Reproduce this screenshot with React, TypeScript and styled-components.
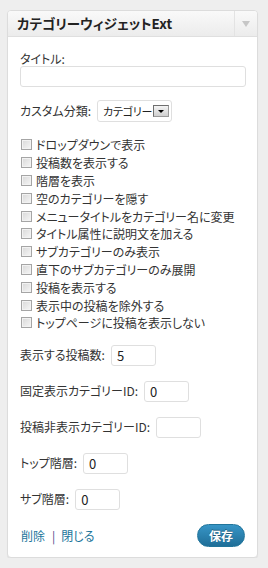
import React from "react";
import styled, { createGlobalStyle } from "styled-components";

const Global = createGlobalStyle`
  html, body { margin: 0; padding: 0; }
  body {
    background: #eeeeee;
    font-family: "Noto Sans CJK JP", "Liberation Sans", sans-serif;
    font-feature-settings: "palt";
    color: #333;
    font-size: 12px;
  }
`;

const Widget = styled.div`
  margin: 10px 0 0 7px;
  width: 249px;
  border: 1px solid #dcdcdc;
  border-radius: 4px;
  background: #fff;
  box-shadow: 0 1px 1px rgba(0, 0, 0, 0.06);
  overflow: hidden;
`;

const Header = styled.div`
  display: flex;
  height: 25px;
  background: linear-gradient(#f9f9f9, #ececec);
  border-bottom: 1px solid #dfdfdf;
`;

const Title = styled.h3`
  flex: 1;
  margin: 0;
  padding-left: 9px;
  font-size: 13.5px;
  font-weight: bold;
  line-height: 25px;
  color: #222;
`;

const Toggle = styled.div`
  width: 22px;
  border-left: 1px solid #e3e3e3;
  display: flex;
  align-items: center;
  justify-content: center;
  &::after {
    content: "";
    border-left: 4px solid transparent;
    border-right: 4px solid transparent;
    border-top: 6px solid #c6c6c6;
    margin-top: 1px;
  }
`;

const Body = styled.div`
  padding: 0 11px 10px 12px;
  display: flex;
  flex-direction: column;
`;

const FieldLabel = styled.label`
  display: block;
  margin-top: 15px;
  line-height: 14px;
`;

const TextInput = styled.input`
  box-sizing: border-box;
  width: 226px;
  height: 21px;
  border: 1px solid #dfdfdf;
  border-radius: 3px;
  padding: 0 5px;
  font: inherit;
  outline: none;
`;

const Row = styled.div<{ $mt: number }>`
  display: flex;
  align-items: center;
  gap: 6px;
  margin-top: ${(p) => p.$mt}px;
  line-height: 16px;
`;

const SelectBox = styled.div`
  box-sizing: border-box;
  flex: 0 0 75px;
  width: 75px;
  height: 22px;
  border: 1px solid #dfdfdf;
  border-radius: 3px;
  display: flex;
  align-items: center;
  gap: 1px;
  padding: 0 4px 0 5px;
  color: #222;
  white-space: nowrap;
`;

const SelectText = styled.span`
  flex: 1;
  font-size: 11px;
  letter-spacing: -0.2px;
`;

const DropBtn = styled.span`
  box-sizing: border-box;
  flex: 0 0 16px;
  width: 16px;
  height: 12px;
  border: 1px solid #6e6e6e;
  border-right-color: #9a9a9a;
  border-bottom-color: #9a9a9a;
  background: linear-gradient(#f4f4f4, #cfcfcf);
  display: flex;
  align-items: center;
  justify-content: center;
  &::after {
    content: "";
    border-left: 3px solid transparent;
    border-right: 3px solid transparent;
    border-top: 3px solid #000;
  }
`;

const CheckList = styled.div`
  margin-top: 14px;
  display: flex;
  flex-direction: column;
`;

const CheckRow = styled.label`
  display: flex;
  align-items: center;
  height: 17.8px;
  color: #333;
`;

const Check = styled.input`
  appearance: none;
  margin: 0 4px 0 1px;
  width: 11px;
  height: 11px;
  box-sizing: border-box;
  border: 1px solid #a5a5a5;
  background: linear-gradient(135deg, #d8d8d8, #f6f6f6);
  box-shadow: inset 0 0 0 1px #f2f2f2;
`;

const NumInput = styled.input`
  box-sizing: border-box;
  width: 45px;
  height: 21px;
  border: 1px solid #dfdfdf;
  border-radius: 3px;
  padding: 0 5px;
  font: inherit;
  font-size: 13px;
  color: #222;
  outline: none;
`;

const Footer = styled.div`
  margin-top: 14px;
  display: flex;
  align-items: center;
  justify-content: space-between;
`;

const Links = styled.div`
  display: flex;
  align-items: center;
  padding-left: 1px;
`;

const Link = styled.a`
  color: #21759b;
  text-decoration: none;
  font-size: 12px;
`;

const Sep = styled.span`
  color: #4a4a8a;
  margin: 0 6px 0 7px;
`;

const SaveButton = styled.button`
  width: 48px;
  height: 23px;
  margin-right: 1px;
  border: 1px solid #21759b;
  border-radius: 12px;
  background: linear-gradient(#3795c6, #1f6e98);
  color: #fff;
  font: inherit;
  font-size: 12px;
  font-weight: bold;
  text-shadow: 0 -1px 0 rgba(0, 0, 0, 0.35);
  padding: 0;
  cursor: pointer;
`;

const checks = [
  "ドロップダウンで表示",
  "投稿数を表示する",
  "階層を表示",
  "空のカテゴリーを隠す",
  "メニュータイトルをカテゴリー名に変更",
  "タイトル属性に説明文を加える",
  "サブカテゴリーのみ表示",
  "直下のサブカテゴリーのみ展開",
  "投稿を表示する",
  "表示中の投稿を除外する",
  "トップページに投稿を表示しない",
];

const numbers: { label: string; value: string; mt: number }[] = [
  { label: "表示する投稿数:", value: "5", mt: 13 },
  { label: "固定表示カテゴリーID:", value: "0", mt: 15 },
  { label: "投稿非表示カテゴリーID:", value: "", mt: 15 },
  { label: "トップ階層:", value: "0", mt: 15 },
  { label: "サブ階層:", value: "0", mt: 15 },
];

export default function App() {
  return (
    <>
      <Global />
      <Widget>
        <Header>
          <Title>カテゴリーウィジェットExt</Title>
          <Toggle />
        </Header>
        <Body>
          <FieldLabel>タイトル:</FieldLabel>
          <TextInput type="text" defaultValue="" />
          <Row $mt={13}>
            <span>カスタム分類:</span>
            <SelectBox>
              <SelectText>カテゴリー</SelectText>
              <DropBtn />
            </SelectBox>
          </Row>
          <CheckList>
            {checks.map((c) => (
              <CheckRow key={c}>
                <Check type="checkbox" />
                <span>{c}</span>
              </CheckRow>
            ))}
          </CheckList>
          {numbers.map((n) => (
            <Row key={n.label} $mt={n.mt}>
              <span>{n.label}</span>
              <NumInput type="text" defaultValue={n.value} />
            </Row>
          ))}
          <Footer>
            <Links>
              <Link href="#">削除</Link>
              <Sep>|</Sep>
              <Link href="#">閉じる</Link>
            </Links>
            <SaveButton>保存</SaveButton>
          </Footer>
        </Body>
      </Widget>
    </>
  );
}
